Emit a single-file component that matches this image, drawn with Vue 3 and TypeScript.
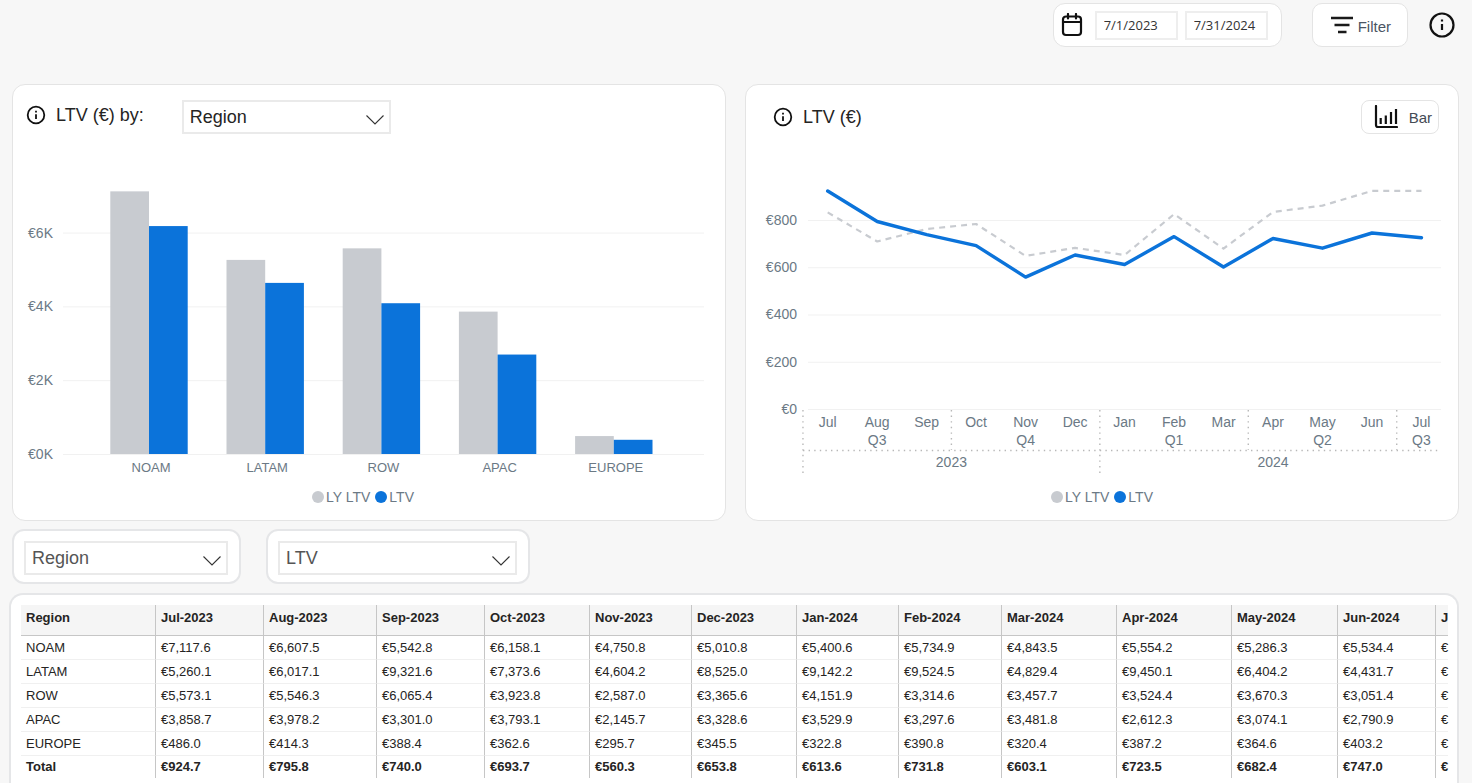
<script setup lang="ts">
import { ref } from 'vue'

interface RegionBar {
  name: string
  lastYear: number
  current: number
}

interface Column {
  label: string
  width: number | null
}

interface Row {
  name: string
  values: string[]
}

const startDate = ref('7/1/2023')
const endDate = ref('7/31/2024')
const chartDimension = ref('Region')
const tableDimension = ref('Region')
const measure = ref('LTV')

// Bar chart: LTV by region
const bars: RegionBar[] = [
  { name: 'NOAM', lastYear: 7117.6, current: 6177 },
  { name: 'LATAM', lastYear: 5260.1, current: 4637 },
  { name: 'ROW', lastYear: 5573.1, current: 4086 },
  { name: 'APAC', lastYear: 3858.7, current: 2695 },
  { name: 'EUROPE', lastYear: 486, current: 385 },
]
const barTicks = [0, 2, 4, 6]
const barBase = 304
const barWidth = 38.7
const barHeight = (value: number) => value * 0.0369
const barLeft = (index: number) => 97.3 + index * 116.2

// Line chart: LTV by month
const months = ['Jul', 'Aug', 'Sep', 'Oct', 'Nov', 'Dec', 'Jan', 'Feb', 'Mar', 'Apr', 'May', 'Jun', 'Jul']
const current = [924.7, 795.8, 740, 693.7, 560.3, 653.8, 613.6, 731.8, 603.1, 723.5, 682.4, 747, 727]
const lastYear = [834, 711, 764, 785, 650, 684, 654, 827, 681, 836, 863, 925, 925]
const quarters = [
  { label: 'Q3', month: 1 },
  { label: 'Q4', month: 4 },
  { label: 'Q1', month: 7 },
  { label: 'Q2', month: 10 },
  { label: 'Q3', month: 12 },
]
const years = [
  { label: '2023', month: 2.5 },
  { label: '2024', month: 9 },
]
const dividers = [
  { month: 0, bottom: 324 },
  { month: 3, bottom: 300 },
  { month: 6, bottom: 324 },
  { month: 9, bottom: 300 },
  { month: 12, bottom: 300 },
]
const lineTicks = [0, 200, 400, 600, 800]
const monthX = (index: number) => 81.7 + index * 49.48
const valueY = (value: number) => 259.5 - value * 0.2363
const points = (values: number[]) => values.map((v, i) => `${monthX(i).toFixed(1)},${valueY(v).toFixed(1)}`).join(' ')

const columns: Column[] = [
  { label: 'Region', width: 134 },
  { label: 'Jul-2023', width: 108 },
  { label: 'Aug-2023', width: 113 },
  { label: 'Sep-2023', width: 108 },
  { label: 'Oct-2023', width: 105 },
  { label: 'Nov-2023', width: 102 },
  { label: 'Dec-2023', width: 105 },
  { label: 'Jan-2024', width: 102 },
  { label: 'Feb-2024', width: 103 },
  { label: 'Mar-2024', width: 115 },
  { label: 'Apr-2024', width: 115 },
  { label: 'May-2024', width: 106 },
  { label: 'Jun-2024', width: 98 },
  { label: 'J', width: null },
]
const rows: Row[] = [
  { name: 'NOAM', values: ['€7,117.6', '€6,607.5', '€5,542.8', '€6,158.1', '€4,750.8', '€5,010.8', '€5,400.6', '€5,734.9', '€4,843.5', '€5,554.2', '€5,286.3', '€5,534.4', '€'] },
  { name: 'LATAM', values: ['€5,260.1', '€6,017.1', '€9,321.6', '€7,373.6', '€4,604.2', '€8,525.0', '€9,142.2', '€9,524.5', '€4,829.4', '€9,450.1', '€6,404.2', '€4,431.7', '€'] },
  { name: 'ROW', values: ['€5,573.1', '€5,546.3', '€6,065.4', '€3,923.8', '€2,587.0', '€3,365.6', '€4,151.9', '€3,314.6', '€3,457.7', '€3,524.4', '€3,670.3', '€3,051.4', '€'] },
  { name: 'APAC', values: ['€3,858.7', '€3,978.2', '€3,301.0', '€3,793.1', '€2,145.7', '€3,328.6', '€3,529.9', '€3,297.6', '€3,481.8', '€2,612.3', '€3,074.1', '€2,790.9', '€'] },
  { name: 'EUROPE', values: ['€486.0', '€414.3', '€388.4', '€362.6', '€295.7', '€345.5', '€322.8', '€390.8', '€320.4', '€387.2', '€364.6', '€403.2', '€'] },
]
const totals = ['€924.7', '€795.8', '€740.0', '€693.7', '€560.3', '€653.8', '€613.6', '€731.8', '€603.1', '€723.5', '€682.4', '€747.0', '€']
</script>

<template>
  <main class="page">
    <header class="toolbar">
      <div class="dates">
        <svg class="calendar" viewBox="0 0 22 24" aria-hidden="true">
          <rect x="2" y="3.5" width="18" height="18.5" rx="3" />
          <path d="M2 9H20M7 1V5.5M15 1V5.5" />
        </svg>
        <input v-model="startDate" class="date" type="text" aria-label="Start date" />
        <input v-model="endDate" class="date" type="text" aria-label="End date" />
      </div>
      <button class="filter" type="button">
        <svg class="filter-icon" viewBox="0 0 22 18" aria-hidden="true">
          <path d="M0 2H22M3.5 9H18.5M7 16H15.5" />
        </svg>
        Filter
      </button>
      <button class="icon-button" type="button" aria-label="About this report">
        <svg class="info info-large" viewBox="0 0 26 26" aria-hidden="true">
          <circle cx="13" cy="13" r="11.5" />
          <path d="M13 12V18M13 7.5V9.5" />
        </svg>
      </button>
    </header>

    <div class="charts">
      <section class="card">
        <div class="card-head">
          <div class="heading raised">
            <button class="icon-button" type="button" aria-label="About LTV by region">
              <svg class="info" viewBox="0 0 20 20" aria-hidden="true">
                <circle cx="10" cy="10" r="8.3" />
                <path d="M10 9.2V14M10 5.7V7.5" />
              </svg>
            </button>
            <label class="title" for="chart-dimension">LTV (€) by:</label>
          </div>
          <div class="dropdown chart-dropdown">
            <select id="chart-dimension" v-model="chartDimension">
              <option>Region</option>
            </select>
            <svg class="chevron" viewBox="0 0 18 10" aria-hidden="true"><path d="M0.5 0.5L9 9L17.5 0.5" /></svg>
          </div>
        </div>
        <svg class="chart" viewBox="0 0 712 330" role="img" aria-label="LTV by region">
          <g v-for="tick in barTicks" :key="tick">
            <line class="grid" x1="50" x2="691" :y1="barBase + 0.5 - barHeight(tick * 1000)" :y2="barBase + 0.5 - barHeight(tick * 1000)" />
            <text class="tick" x="40" :y="barBase + 5 - barHeight(tick * 1000)">€{{ tick }}K</text>
          </g>
          <g v-for="(bar, i) in bars" :key="bar.name">
            <rect class="bar-last" :x="barLeft(i)" :y="barBase - barHeight(bar.lastYear)" :width="barWidth" :height="barHeight(bar.lastYear)" />
            <rect class="bar-current" :x="barLeft(i) + barWidth" :y="barBase - barHeight(bar.current)" :width="barWidth" :height="barHeight(bar.current)" />
            <text class="category" :x="barLeft(i) + barWidth + 2" y="322">{{ bar.name }}</text>
          </g>
        </svg>
        <div class="legend legend-bars">
          <span class="key"><i class="dot"></i>LY LTV</span>
          <span class="key"><i class="dot dot-current"></i>LTV</span>
        </div>
      </section>

      <section class="card">
        <div class="card-head trend-head">
          <div class="heading">
            <button class="icon-button" type="button" aria-label="About LTV">
              <svg class="info" viewBox="0 0 20 20" aria-hidden="true">
                <circle cx="10" cy="10" r="8.3" />
                <path d="M10 9.2V14M10 5.7V7.5" />
              </svg>
            </button>
            <h2 class="title">LTV (€)</h2>
          </div>
          <button class="bar-toggle" type="button">
            <svg class="bar-icon" viewBox="0 0 24 24" aria-hidden="true">
              <path class="axes" d="M2 1V20Q2 22 4 22H23" />
              <path d="M6.7 13V19M11.8 10.5V19M17 7V19M22 4V19" />
            </svg>
            Bar
          </button>
        </div>
        <svg class="chart" viewBox="0 0 712 330" role="img" aria-label="LTV by month">
          <g v-for="tick in lineTicks" :key="tick">
            <line class="grid" x1="62" x2="695" :y1="valueY(tick)" :y2="valueY(tick)" />
            <text class="tick" x="51" :y="valueY(tick) + 4.5">€{{ tick }}</text>
          </g>
          <polyline class="line-last" :points="points(lastYear)" />
          <polyline class="line-current" :points="points(current)" />
          <line v-for="d in dividers" :key="d.month" class="dotted" :x1="monthX(d.month - 0.5)" :x2="monthX(d.month - 0.5)" y1="260" :y2="d.bottom" />
          <line class="dotted" x1="57" x2="694" y1="300.5" y2="300.5" />
          <text v-for="(m, i) in months" :key="`m${i}`" class="month" :x="monthX(i)" y="277">{{ m }}</text>
          <text v-for="q in quarters" :key="`q${q.month}`" class="month" :x="monthX(q.month)" y="295">{{ q.label }}</text>
          <text v-for="y in years" :key="y.label" class="month" :x="monthX(y.month)" y="317">{{ y.label }}</text>
        </svg>
        <div class="legend">
          <span class="key"><i class="dot"></i>LY LTV</span>
          <span class="key"><i class="dot dot-current"></i>LTV</span>
        </div>
      </section>
    </div>

    <div class="selectors">
      <div class="selector">
        <div class="dropdown region-dropdown">
          <select v-model="tableDimension" aria-label="Table rows">
            <option>Region</option>
          </select>
          <svg class="chevron" viewBox="0 0 18 10" aria-hidden="true"><path d="M0.5 0.5L9 9L17.5 0.5" /></svg>
        </div>
      </div>
      <div class="selector">
        <div class="dropdown measure-dropdown">
          <select v-model="measure" aria-label="Table measure">
            <option>LTV</option>
          </select>
          <svg class="chevron" viewBox="0 0 18 10" aria-hidden="true"><path d="M0.5 0.5L9 9L17.5 0.5" /></svg>
        </div>
      </div>
    </div>

    <section class="sheet">
      <table>
        <colgroup>
          <col v-for="c in columns" :key="c.label" :style="c.width ? { width: `${c.width}px` } : undefined" />
        </colgroup>
        <thead>
          <tr>
            <th v-for="c in columns" :key="c.label" scope="col">{{ c.label }}</th>
          </tr>
        </thead>
        <tbody>
          <tr v-for="row in rows" :key="row.name">
            <th scope="row">{{ row.name }}</th>
            <td v-for="(v, i) in row.values" :key="i">{{ v }}</td>
          </tr>
        </tbody>
        <tfoot>
          <tr>
            <th scope="row">Total</th>
            <td v-for="(v, i) in totals" :key="i">{{ v }}</td>
          </tr>
        </tfoot>
      </table>
    </section>
  </main>
</template>

<style>
body {
  margin: 0;
  background: #f7f7f7;
}
</style>

<style scoped>
.page,
.page * {
  box-sizing: border-box;
}

.page {
  display: flex;
  flex-direction: column;
  min-height: 100vh;
  font-family: "Liberation Sans", Arial, sans-serif;
  color: #252423;
  background: #f7f7f7;
}

button,
input,
select {
  font-family: inherit;
  color: inherit;
}

.toolbar {
  display: flex;
  justify-content: flex-end;
  align-items: center;
  padding: 3px 17px 0 0;
  margin-bottom: 37px;
}

.dates {
  display: flex;
  align-items: center;
  gap: 7px;
  height: 44px;
  padding: 0 13px 0 7px;
  margin-right: 30px;
  background: #fff;
  border: 1px solid #e4e4e4;
  border-radius: 12px;
}

.calendar {
  width: 22px;
  height: 24px;
  margin-right: 5px;
  fill: none;
  stroke: #111;
  stroke-width: 2.2;
  stroke-linecap: round;
}

.date {
  width: 83px;
  height: 29px;
  padding: 0 7px;
  font-family: "Open Sans", "Noto Sans", sans-serif;
  font-size: 13px;
  color: #333;
  background: #fff;
  border: 2px solid #eee;
  border-radius: 0;
}

.filter {
  display: flex;
  align-items: center;
  gap: 5px;
  height: 44px;
  padding: 2px 16px 0 18px;
  margin-right: 21px;
  font-size: 15px;
  color: #4b5563;
  background: #fff;
  border: 1px solid #e4e4e4;
  border-radius: 10px;
}

.filter-icon {
  width: 22px;
  height: 18px;
  margin-bottom: 3px;
  fill: none;
  stroke: #1a1a1a;
  stroke-width: 2.4;
}

.icon-button {
  display: flex;
  padding: 0;
  background: none;
  border: 0;
}

.info {
  width: 20px;
  height: 20px;
  fill: none;
  stroke: #111;
  stroke-width: 1.8;
}

.info-large {
  width: 26px;
  height: 26px;
  stroke-width: 2.2;
}

.charts {
  display: grid;
  grid-template-columns: 1fr 1fr;
  gap: 19px;
  padding: 0 13px 0 12px;
}

.card {
  padding: 15px 0;
  background: #fff;
  border: 1px solid #e4e4e4;
  border-radius: 13px;
}

.card-head {
  display: flex;
  align-items: center;
  height: 34px;
  padding-left: 13px;
  margin-bottom: 16px;
}

.trend-head {
  justify-content: space-between;
  padding: 0 19px 0 27px;
}

.heading {
  display: flex;
  align-items: center;
  gap: 10px;
}

.raised {
  padding-bottom: 4px;
}

.title {
  margin: 0;
  font-size: 18px;
  line-height: 20px;
  font-weight: 400;
}

.dropdown {
  position: relative;
}

.dropdown select {
  display: block;
  width: 100%;
  height: 34px;
  padding: 0 30px 0 6px;
  font-size: 18px;
  appearance: none;
  background: #fff;
  border: 2px solid #eaeaea;
  border-radius: 0;
}

.chevron {
  position: absolute;
  right: 7px;
  top: 15px;
  width: 18px;
  height: 10px;
  fill: none;
  stroke: #333;
  stroke-width: 1.1;
  pointer-events: none;
}

.chart-dropdown {
  width: 209px;
  margin-left: 38px;
}

.region-dropdown {
  width: 204px;
}

.measure-dropdown {
  width: 239px;
}

.bar-toggle {
  display: flex;
  align-items: center;
  gap: 11px;
  height: 34px;
  padding: 0 6px 0 12px;
  font-size: 15px;
  color: #444b55;
  background: #fff;
  border: 1px solid #e4e4e4;
  border-radius: 8px;
}

.bar-icon {
  width: 24px;
  height: 24px;
  fill: none;
  stroke: #111;
  stroke-width: 2.2;
}

.axes {
  stroke-linecap: round;
}

.chart {
  display: block;
  width: 100%;
  height: auto;
  font-size: 14px;
  fill: #6b7985;
}

.grid {
  stroke: #f1f1f1;
  stroke-width: 1;
}

.tick {
  text-anchor: end;
}

.month {
  text-anchor: middle;
}

.category {
  font-size: 13px;
  text-anchor: middle;
}

.bar-last {
  fill: #c8cbd0;
}

.bar-current {
  fill: #0b73da;
}

.line-last,
.line-current {
  fill: none;
  stroke-linejoin: round;
}

.line-last {
  stroke: #c8cbd0;
  stroke-width: 2.2;
  stroke-dasharray: 6 5;
}

.line-current {
  stroke: #0b73da;
  stroke-width: 3.4;
  stroke-linecap: round;
}

.dotted {
  stroke: #b8b8b8;
  stroke-width: 1.4;
  stroke-dasharray: 1.4 4.2;
}

.legend {
  display: flex;
  justify-content: center;
  gap: 5px;
  padding-top: 9px;
  font-size: 14px;
  line-height: 16px;
  color: #6b7985;
}

.legend-bars {
  padding-right: 12px;
}

.key {
  display: flex;
  align-items: center;
  gap: 2px;
}

.dot {
  width: 12px;
  height: 12px;
  background: #c8cbd0;
  border-radius: 50%;
}

.dot-current {
  background: #0b73da;
}

.selectors {
  display: flex;
  gap: 25px;
  padding: 8px 12px 9px;
  color: #555;
}

.selector {
  padding: 10px 11px 7px 10px;
  background: #fff;
  border: 2px solid #e5e6e8;
  border-radius: 12px;
}

.sheet {
  flex: 1;
  padding: 10px 9px 6px 10px;
  margin: 0 13px 0 9px;
  overflow: hidden;
  background: #fff;
  border: 2px solid #e5e6e8;
  border-bottom: 0;
  border-radius: 14px 14px 0 0;
}

table {
  width: 100%;
  table-layout: fixed;
  border-collapse: separate;
  border-spacing: 0;
  font-size: 13px;
  line-height: 16px;
  text-align: left;
}

th,
td {
  height: 24px;
  padding: 0 0 0 5px;
  border-bottom: 1px solid #f0f0f0;
  white-space: nowrap;
}

th + th,
td {
  border-left: 1px solid #c6c6c6;
}

thead th {
  height: 31px;
  padding-bottom: 5px;
  background: #f5f5f5;
  border-bottom-color: #c6c6c6;
}

tbody th {
  font-weight: 400;
}

tfoot th,
tfoot td {
  height: 22px;
  border-bottom: 0;
  font-weight: 700;
}
</style>
